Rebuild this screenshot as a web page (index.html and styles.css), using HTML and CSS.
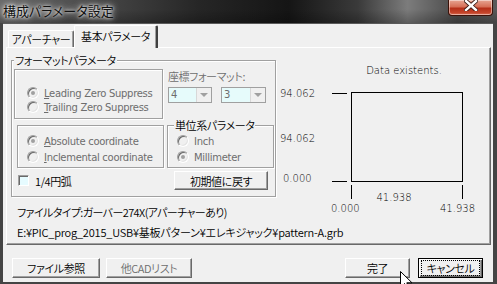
FILE: index.html
```html
<!DOCTYPE html>
<html lang="ja">
<head>
    <meta charset="UTF-8">
    <meta name="viewport" content="width=device-width, initial-scale=1.0">
    <title>構成パラメータ設定</title>
    <link rel="stylesheet" href="styles.css">
</head>
<body>
    <div class="window">
        <div class="titlebar">
            <span class="title">構成パラメータ設定</span>
            <div class="close">
                <svg width="14" height="11" viewBox="0 0 14 11">
                    <path d="M2 1 L12 10 M12 1 L2 10" stroke="#3a1a14" stroke-width="4.2" stroke-linecap="square"/>
                    <path d="M2 1 L12 10 M12 1 L2 10" stroke="#fff" stroke-width="2.4" stroke-linecap="square"/>
                </svg>
            </div>
        </div>

        <div class="client">
            <div class="tabs">
                <div class="tab first">アパーチャー</div>
                <div class="tab active">基本パラメータ</div>
            </div>

            <div class="panel">
                <fieldset class="group format">
                    <legend>フォーマットパラメータ</legend>

                    <div class="g-row">
                        <div class="frame zero">
                            <div class="opt en dis"><span class="radio on"></span><span><u>L</u>eading Zero Suppress</span></div>
                            <div class="opt en dis"><span class="radio"></span><span><u>T</u>railing Zero Suppress</span></div>
                        </div>
                        <div class="coords">
                            <div class="lbl dis">座標フォーマット:</div>
                            <div class="combos">
                                <div class="combo"><span class="val">4</span><span class="drop"></span></div>
                                <div class="combo wide"><span class="val">3</span><span class="drop"></span></div>
                            </div>
                        </div>
                    </div>

                    <div class="g-row">
                        <div class="frame coord">
                            <div class="opt en dis"><span class="radio on"></span><span><u>A</u>bsolute coordinate</span></div>
                            <div class="opt en dis"><span class="radio"></span><span><u>I</u>nclemental coordinate</span></div>
                        </div>
                        <fieldset class="group unit">
                            <legend>単位系パラメータ</legend>
                            <div class="opt en dis"><span class="radio"></span><span>Inch</span></div>
                            <div class="opt en dis"><span class="radio on"></span><span>Millimeter</span></div>
                        </fieldset>
                    </div>

                    <div class="g-row last">
                        <div class="check"><span class="box"></span><span>1/4円弧</span></div>
                        <div class="btn reset">初期値に戻す</div>
                    </div>
                </fieldset>

                <svg class="plot" width="214" height="166" viewBox="276 53 214 166">
                    <text x="404" y="73" text-anchor="middle">Data existents.</text>
                    <text x="280" y="96">94.062</text>
                    <text x="280" y="141">94.062</text>
                    <text x="283" y="181">0.000</text>
                    <path d="M332 92.5 H347 M332 180.5 H347 M351.5 184 V198 M462.5 184 V198" stroke="#000" stroke-width="1"/>
                    <rect x="351.5" y="91.5" width="111" height="89" fill="none" stroke="#000" stroke-width="1"/>
                    <text x="394" y="200" text-anchor="middle">41.938</text>
                    <text x="331" y="211">0.000</text>
                    <text x="440" y="211">41.938</text>
                </svg>

                <div class="filetype">ファイルタイプ:ガーバー274X(アパーチャーあり)</div>
                <div class="path">E:¥PIC_prog_2015_USB¥基板パターン¥エレキジャック¥pattern-A.grb</div>
            </div>

            <div class="buttons">
                <div class="btn file">ファイル参照</div>
                <div class="btn cad dis">他CADリスト</div>
                <div class="btn ok">完了</div>
                <div class="btn cancel default"><span class="focus">キャンセル</span></div>
            </div>
        </div>

        <svg class="cursor" width="13" height="20" viewBox="0 0 13 20">
            <path d="M0.5 0.5 V16.5 L4.5 12.5 L7.5 19 L9.5 18 L6.8 11.8 H12 Z" fill="#fff" stroke="#000" stroke-width="1"/>
        </svg>
    </div>
</body>
</html>
```

FILE: styles.css
```css
* {
  box-sizing: border-box;
}

body {
  margin: 0;
  background: #fff;
}

.window {
  position: relative;
  width: 497px;
  height: 284px;
  overflow: hidden;
  background: #444;
  font-family: "Noto Sans CJK JP", sans-serif;
  font-feature-settings: "palt" 1;
  font-size: 11px;
  font-weight: 350;
  letter-spacing: -0.4px;
  color: #000;
}

/* title bar */
.titlebar {
  height: 23px;
  display: flex;
  justify-content: space-between;
  align-items: flex-start;
  background:
    linear-gradient(180deg, rgba(0, 0, 0, 0) 40%, rgba(0, 0, 0, 0.25) 100%),
    linear-gradient(90deg, #6a6a6a 0%, #4a4a4a 18%, #262626 40%, #151515 58%, #3a3a3a 72%, #7c7c7c 82%, #4a4a4a 92%, #5a5a5a 100%);
}

.title {
  padding: 1px 0 0 3px;
  font-size: 13px;
  font-weight: 400;
  letter-spacing: 0;
  line-height: 20px;
  color: #111;
  text-shadow: 0 0 3px #fff, 0 0 6px rgba(255, 255, 255, 0.8), 0 0 9px rgba(255, 255, 255, 0.6);
}

.close {
  width: 45px;
  height: 16px;
  margin-right: 4px;
  display: flex;
  justify-content: center;
  align-items: center;
  border: 1px solid #3b1209;
  border-top: none;
  border-radius: 0 0 4px 4px;
  background: linear-gradient(180deg, #e7a593 0%, #d66f57 45%, #b52f19 55%, #c4452b 85%, #d9735a 100%);
  box-shadow: inset 0 0 0 1px rgba(255, 255, 255, 0.45);
}

.close svg {
  margin-top: -4px;
}

/* client area */
.client {
  height: 259px;
  margin: 0 4px 0 3px;
  padding: 1px 2px 0 3px;
  background: #f0f0f0;
  border-top: 1px solid #5a5a5a;
}

.tabs {
  height: 22px;
  display: flex;
  align-items: flex-end;
  padding-left: 2px;
}

.tab {
  height: 17px;
  text-align: center;
  line-height: 16px;
  white-space: nowrap;
  border-top: 1px solid #fff;
  border-left: 1px solid #fff;
  border-right: 1px solid #696969;
  border-radius: 2px 2px 0 0;
  box-shadow: inset -1px 0 #a0a0a0;
}

.tab.first {
  width: 66px;
}

.tab.active {
  width: 84px;
  height: 23px;
  margin-bottom: -1px;
  line-height: 20px;
  background: #f0f0f0;
  border-right: 2px solid #404040;
  position: relative;
}

.panel {
  height: 198px;
  display: grid;
  grid-template-columns: 269px 1fr;
  align-items: start;
  padding-top: 6px;
  border: 1px solid;
  border-color: #fff #696969 #696969 #fff;
  box-shadow: inset -1px -1px #a0a0a0;
}

/* group boxes */
fieldset {
  margin: 0;
  padding: 0;
  min-width: 0;
}

.group {
  border: 1px solid #a0a0a0;
  box-shadow: inset 1px 1px #fff, 1px 1px #fff;
}

.group legend {
  padding: 0 1px;
  line-height: 12px;
  white-space: nowrap;
  background: #f0f0f0;
}

.format {
  width: 265px;
  margin-left: 4px;
  padding-bottom: 6px;
}

.format > legend {
  margin-left: 2px;
}

.frame {
  border: 1px solid #a0a0a0;
  box-shadow: inset 1px 1px #fff, 1px 1px #fff;
}

.g-row {
  display: flex;
  align-items: flex-start;
}

.zero {
  width: 149px;
  height: 50px;
  margin: 3px 0 0 2px;
  padding: 16px 0 0 12px;
}

.zero .opt {
  height: 14px;
}

.coords {
  margin-left: 5px;
}

.lbl {
  margin-top: 3px;
  line-height: 14px;
}

.combos {
  display: flex;
  gap: 9px;
  margin-top: 4px;
}

.combo {
  width: 44px;
  height: 16px;
  display: flex;
  border: 1px solid #a0a0a0;
  background: #e6fbfb;
}

.combo.wide {
  width: 45px;
}

.combo .val {
  flex: 1;
  padding-left: 2px;
  line-height: 14px;
  color: #6d6d6d;
  font-family: "DejaVu Sans", sans-serif;
  font-weight: 400;
  font-size: 10px;
}

.combo .drop {
  width: 15px;
  display: flex;
  justify-content: center;
  align-items: center;
  background: #f0f0f0;
  border-left: 1px solid #d8d8d8;
}

.combo .drop::after {
  content: "";
  border-left: 4px solid transparent;
  border-right: 4px solid transparent;
  border-top: 4px solid #a0a0a0;
}

.coord {
  width: 147px;
  height: 43px;
  margin: 6px 0 0 5px;
  padding: 7px 0 0 9px;
}

.unit {
  width: 107px;
  height: 49px;
  margin-left: 3px;
  padding: 2px 0 0 0;
}

.unit > legend {
  margin-left: 6px;
}

.unit .opt {
  margin-left: 9px;
}

.coord .opt,
.unit .opt {
  height: 16px;
}

/* options */
.opt {
  display: flex;
  align-items: center;
  gap: 5px;
}

.en {
  font-family: "DejaVu Sans", sans-serif;
  font-size: 10px;
  font-weight: 400;
  letter-spacing: -0.3px;
  font-feature-settings: normal;
}

.dis {
  color: #6d6d6d;
}

.radio {
  width: 12px;
  height: 12px;
  flex: none;
  border-radius: 50%;
  border: 1px solid;
  border-color: #a0a0a0 #fff #fff #a0a0a0;
  box-shadow: inset 1px 1px #696969, inset -1px -1px #e3e3e3;
  background: #f0f0f0;
  display: flex;
  justify-content: center;
  align-items: center;
}

.radio.on::after {
  content: "";
  width: 4px;
  height: 4px;
  border-radius: 50%;
  background: #a0a0a0;
}

.last {
  margin-top: 3px;
  align-items: center;
}

.check {
  display: flex;
  align-items: center;
  gap: 6px;
  margin-left: 6px;
}

.check .box {
  width: 11px;
  height: 11px;
  border: 1px solid;
  border-color: #a0a0a0 #fff #fff #a0a0a0;
  box-shadow: inset 1px 1px #696969;
  background: #e6fbff;
}

/* buttons */
.btn {
  height: 20px;
  display: flex;
  justify-content: center;
  align-items: center;
  background: #f0f0f0;
  border: 1px solid;
  border-color: #fff #696969 #696969 #fff;
  box-shadow: inset -1px -1px #a0a0a0;
  white-space: nowrap;
}

.reset {
  width: 94px;
  height: 19px;
  margin-left: auto;
  margin-right: 7px;
}

.plot {
  grid-column: 2;
  grid-row: 1 / 3;
  font-family: "DejaVu Sans", sans-serif;
  font-size: 10px;
  letter-spacing: 0;
}

.filetype {
  margin-top: 4px;
  padding-left: 10px;
  line-height: 19px;
  white-space: nowrap;
  letter-spacing: -0.6px;
}

.path {
  grid-column: 1 / -1;
  padding-left: 10px;
  line-height: 19px;
  white-space: nowrap;
  letter-spacing: -0.2px;
}

.buttons {
  display: flex;
  margin-top: 13px;
  padding-right: 8px;
}

.file {
  width: 88px;
  margin-left: 6px;
}

.cad {
  width: 86px;
  margin-left: 6px;
}

.ok {
  width: 65px;
  margin-left: auto;
}

.cancel {
  width: 65px;
  margin-left: 8px;
}

.default {
  border: 1px solid #000;
  box-shadow: inset 1px 1px #fff, inset -1px -1px #696969, inset -2px -2px #a0a0a0;
}

.focus {
  width: 57px;
  height: 14px;
  display: flex;
  justify-content: center;
  align-items: center;
  outline: 1px dotted #000;
}

.cursor {
  position: absolute;
  left: 400px;
  top: 271px;
}
```
